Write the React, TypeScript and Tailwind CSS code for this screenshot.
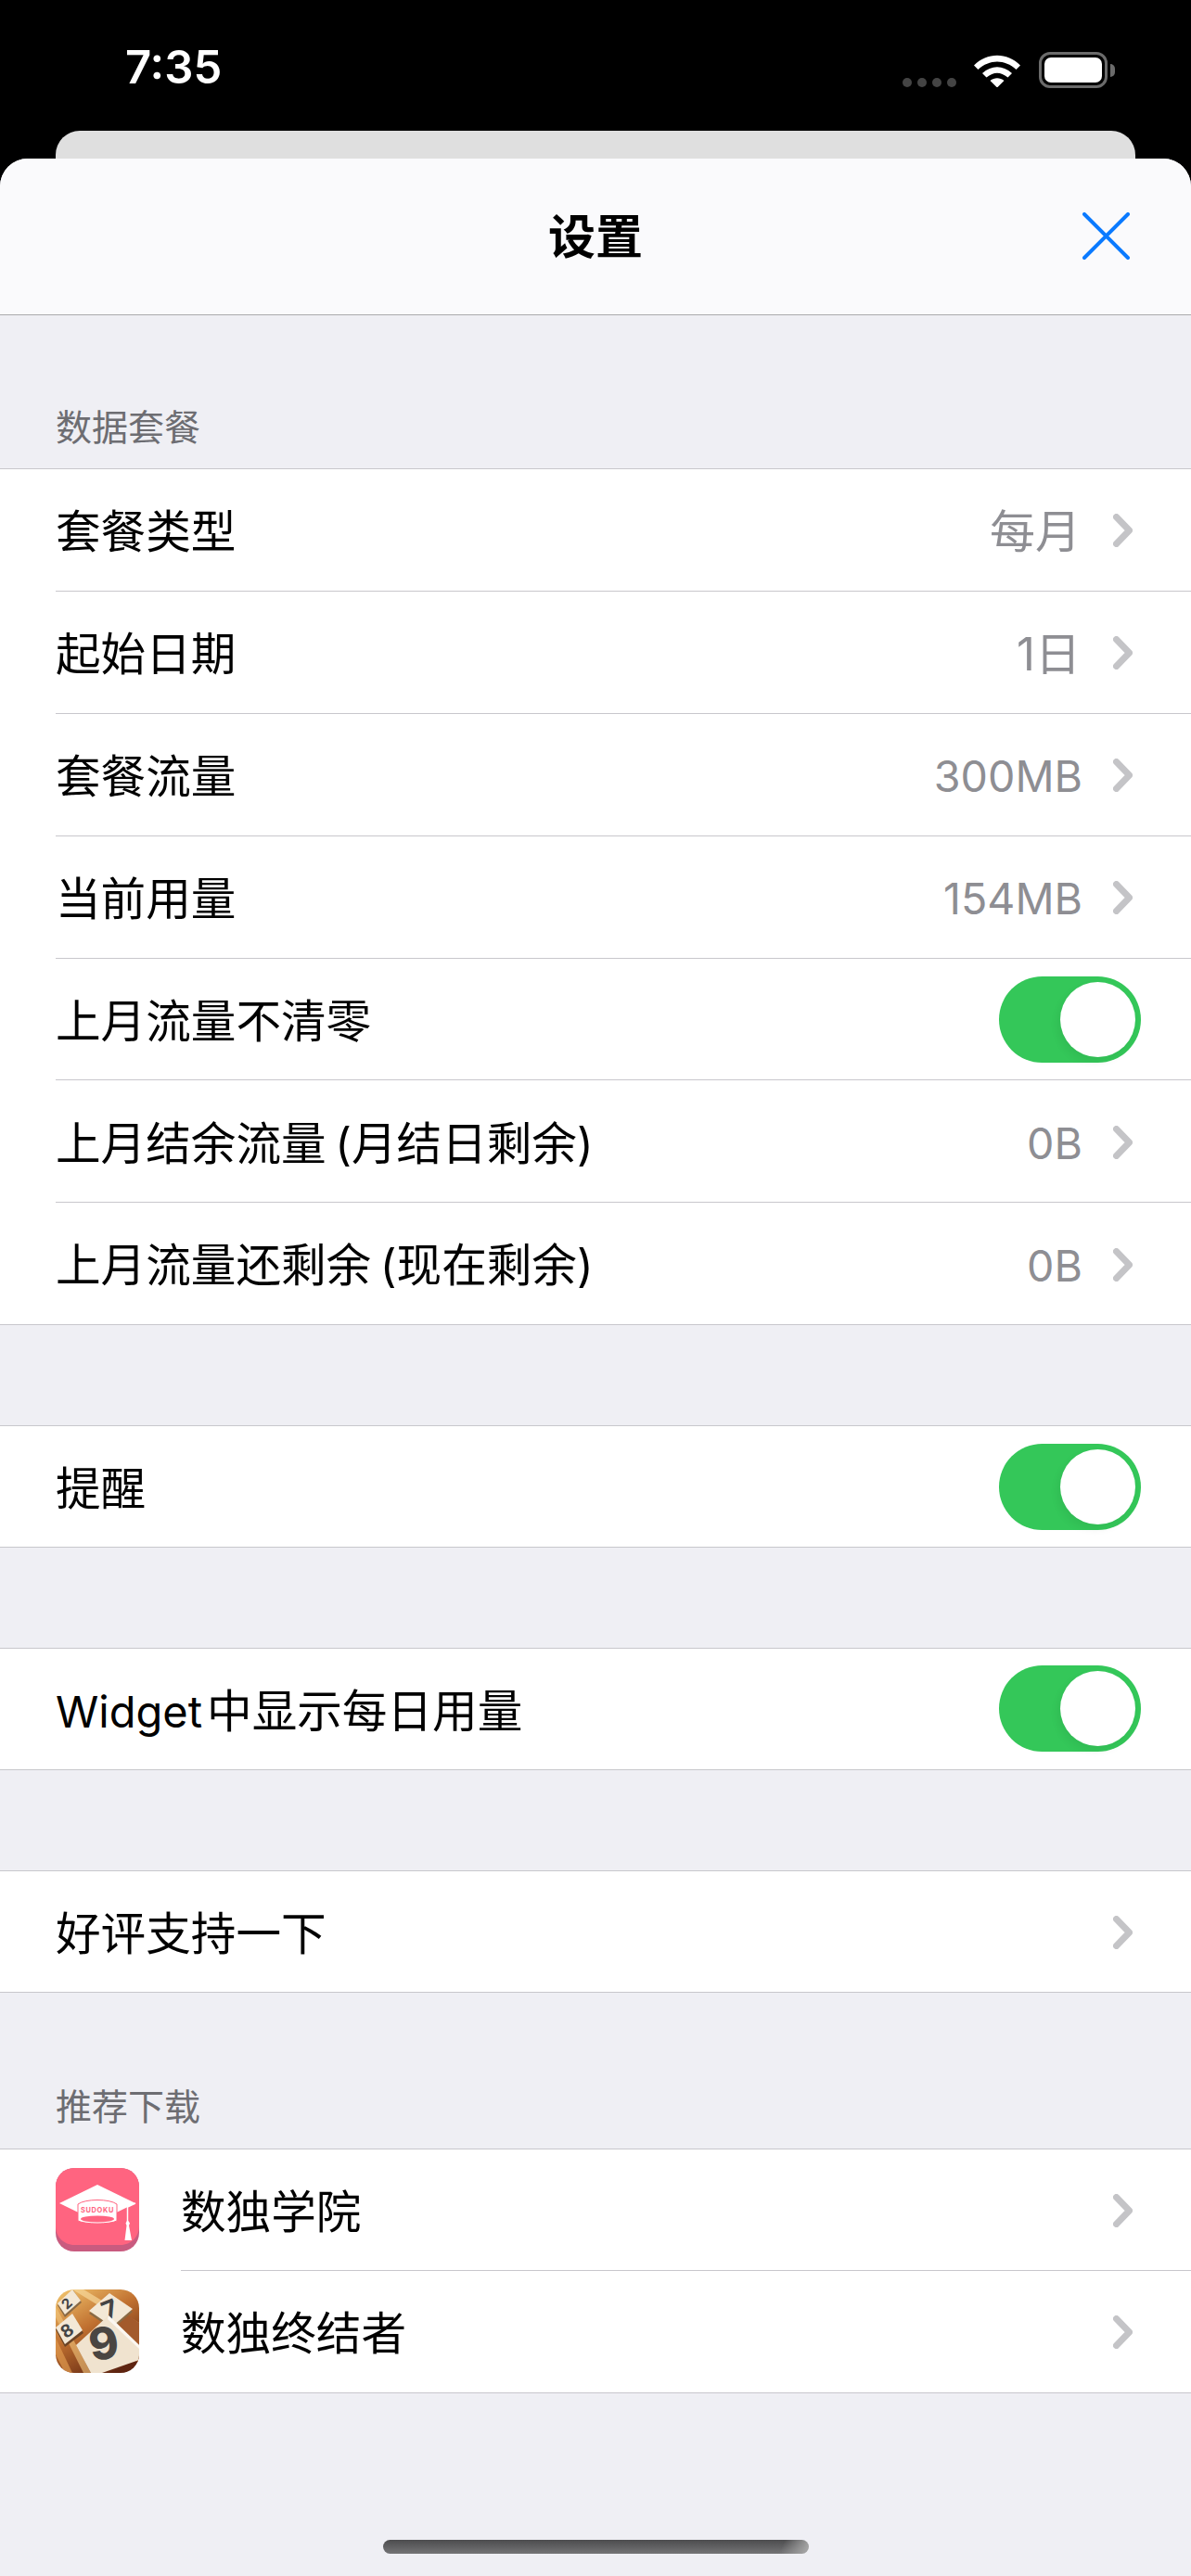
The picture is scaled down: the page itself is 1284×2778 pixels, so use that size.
import React from "react";

const FONT = "[font-family:Inter,'Noto_Sans_CJK_SC',sans-serif]";

function Chevron() {
  return (
    <svg width="21" height="36" viewBox="0 0 21 36" className="shrink-0 mr-[8px] mt-[2px]">
      <path d="M3.5 3.5 L17.5 18 L3.5 32.5" fill="none" stroke="#c4c4c7" strokeWidth="7" strokeLinecap="round" strokeLinejoin="round" />
    </svg>
  );
}

function Toggle() {
  return (
    <div className="w-[153px] h-[93px] rounded-full bg-[#34c759] flex items-center justify-end pr-[6px] mr-[-1px]">
      <div className="w-[81px] h-[81px] rounded-full bg-white shadow-[-3px_5px_10px_rgba(0,0,0,0.06)]" />
    </div>
  );
}

function Row({ label, value, cjkValue, chevron, toggle, last, single }: { label: React.ReactNode; value?: string; cjkValue?: boolean; chevron?: boolean; toggle?: boolean; last?: boolean; single?: boolean }) {
  const height = single ? "h-[130px]" : last ? "h-[130.9px]" : "h-[131.9px] border-b border-[#c8c7cc]";
  return (
    <div className={`ml-[60px] pr-[55px] flex items-center ${height}`}>
      <span className="flex-1 text-[48.6px] leading-none text-black whitespace-nowrap [word-spacing:-4px] pt-[6px]">{label}</span>
      {value && <span className={`text-[#8e8e93] leading-none pt-[5px] ${cjkValue ? "text-[49px] mr-[35px]" : "text-[46.6px] mr-[33px]"}`}>{value}</span>}
      {chevron && <Chevron />}
      {toggle && <Toggle />}
    </div>
  );
}

function Section({ children }: { children: React.ReactNode }) {
  return <div className="bg-white border-y border-[#c8c7cc]">{children}</div>;
}

function Header({ text, className = "" }: { text: string; className?: string }) {
  return (
    <div className={`pl-[60px] flex items-end text-[39px] leading-none text-[#6d6d72] ${className}`}>{text}</div>
  );
}

function HatIcon() {
  return (
    <svg width="90" height="90" viewBox="0 0 90 90" className="shrink-0">
      <defs>
        <clipPath id="c1"><rect width="90" height="90" rx="20" /></clipPath>
      </defs>
      <g clipPath="url(#c1)">
        <rect width="90" height="90" fill="#c95b7f" />
        <path d="M0 0H90V63C90 74 81 83 70 83H20C9 83 0 74 0 63Z" fill="#ff6480" />
        <path d="M4 38L45 18L86 38L45 58Z" fill="#fff" />
        <path d="M24 39C32 33 58 33 66 39V57C58 61 32 61 24 57Z" fill="#fff" stroke="#ff6480" strokeWidth="1" />
        <ellipse cx="45" cy="55" rx="18" ry="3.4" fill="#ff6480" />
        <text x="45" y="48" textAnchor="middle" fontSize="7.4" fontWeight="700" fill="#ff6480" fontFamily="Inter,sans-serif" letterSpacing=".7">SUDOKU</text>
        <path d="M86 38L77.5 42V58" fill="none" stroke="#fff" strokeWidth="1.5" />
        <path d="M77.5 56L80 59.5L79 62L82 78H74.5L76.5 62L75.5 59.5Z" fill="#fff" />
      </g>
    </svg>
  );
}

function WoodIcon() {
  return (
    <svg width="90" height="90" viewBox="0 0 90 90" className="shrink-0">
      <defs>
        <clipPath id="c2"><rect width="90" height="90" rx="20" /></clipPath>
        <linearGradient id="w" x1="0.1" y1="0" x2="0.7" y2="1">
          <stop offset="0" stopColor="#efc06a" />
          <stop offset="0.45" stopColor="#c07030" />
          <stop offset="1" stopColor="#5e2410" />
        </linearGradient>
      </defs>
      <g clipPath="url(#c2)">
        <rect width="90" height="90" fill="url(#w)" />
        <path d="M0 30L30 90H38L0 18Z" fill="#f3c67d" opacity=".6" />
        <path d="M30 0L90 36V44L18 0Z" fill="#f6d79a" opacity=".7" />
        <path d="M0 52L18 90H10L0 70Z" fill="#e09a4f" opacity=".7" />
        <path d="M66 20L90 36V80L70 60Z" fill="#a35a2c" />
        <polygon points="2,17 19,1 28,14 10,30" fill="#8a6a45" />
        <polygon points="2,15 18,0 27,12 10,27" fill="#f3e8d6" />
        <text transform="translate(15.5,19) rotate(-42)" textAnchor="middle" fontSize="15" fontWeight="700" fill="#444" fontFamily="Inter,sans-serif">2</text>
        <polygon points="36,26 58,6 83,24 61,43" fill="#8a6a45" />
        <polygon points="36,23 58,4 83,21 61,40" fill="#f3e8d6" />
        <text transform="translate(62,31) rotate(-22)" textAnchor="middle" fontSize="28" fontWeight="700" fill="#444" fontFamily="Inter,sans-serif">7</text>
        <polygon points="0,43 18,28 30,47 10,62" fill="#6b4426" />
        <polygon points="0,41 18,26 29,44 10,59" fill="#f3e8d6" />
        <text transform="translate(16,50) rotate(-35)" textAnchor="middle" fontSize="19" fontWeight="700" fill="#444" fontFamily="Inter,sans-serif">8</text>
        <polygon points="22,60 57,28 90,60 90,76 50,90 38,90" fill="#f0e3cf" />
        <polygon points="57,28 90,60 90,64 56,32" fill="#fff" opacity=".7" />
        <text transform="translate(55,75) rotate(-10)" textAnchor="middle" fontSize="48" fontWeight="800" fill="#4a4642" fontFamily="Inter,sans-serif">9</text>
      </g>
    </svg>
  );
}

function AppRow({ icon, label, last }: { icon: React.ReactNode; label: string; last?: boolean }) {
  return (
    <div className="flex items-center h-[131px]">
      <div className="w-[195px] pl-[60px] shrink-0">{icon}</div>
      <div className={`flex-1 h-full pr-[55px] flex items-center ${last ? "" : "border-b border-[#c8c7cc]"}`}>
        <span className="flex-1 text-[48.6px] leading-none text-black pt-[6px]">{label}</span>
        <Chevron />
      </div>
    </div>
  );
}

export default function App() {
  return (
    <div className={`w-[1284px] h-[2778px] bg-black overflow-hidden flex flex-col ${FONT}`}>
      <div className="h-[141px] shrink-0 flex items-start pl-[135px] pr-[82px] pt-[44px]">
        <span className="text-white text-[49px] leading-[58px] font-semibold flex-1">7:35</span>
        <div className="flex items-end h-[48px] pt-[9px]">
          <div className="flex gap-[6px] mb-[-2px] mr-[19px]">
            {[0, 1, 2, 3].map((i) => (
              <span key={i} className="w-[10px] h-[10px] rounded-full bg-[#444444]" />
            ))}
          </div>
          <svg width="50" height="38" viewBox="0 0 50 38" className="mr-[20px] mb-[-2px]">
            <path d="M0 14.5C14 0 36 0 50 14.5L45.5 19C33.5 7.5 16.5 7.5 4.5 19Z" fill="#fff" />
            <path d="M9 23C19 14 31 14 41 23L36.5 27.5C28.5 21 21.5 21 13.5 27.5Z" fill="#fff" />
            <path d="M17.5 31C22 27.2 28 27.2 32.5 31L25 38.5Z" fill="#fff" />
          </svg>
          <div className="flex items-center mb-[-3px]">
            <div className="w-[74px] h-[39px] rounded-[12px] border-[3px] border-[#6b6b6b] p-[3px]">
              <div className="w-full h-full rounded-[7px] bg-white" />
            </div>
            <div className="w-[5px] h-[14px] ml-[3px] bg-[#6b6b6b] rounded-r-full" />
          </div>
        </div>
      </div>

      <div className="h-[30px] shrink-0 mx-[60px] bg-[#dfdfdf] rounded-t-[26px]" />

      <div className="flex-1 bg-[#efeff4] rounded-t-[30px] overflow-hidden flex flex-col">
        <div className="h-[169px] shrink-0 bg-[#fafafc] border-b border-[#a9a9ac] flex items-center pl-[591px] pr-[66px]">
          <span className="flex-1 text-[51px] leading-none font-semibold text-black">设置</span>
          <svg width="51" height="51" viewBox="0 0 51 51" className="mt-[-2px]">
            <path d="M2 2L49 49M49 2L2 49" stroke="#0a7aff" strokeWidth="4" strokeLinecap="round" />
          </svg>
        </div>

        <Header text="数据套餐" className="h-[165px] pb-[25px]" />
        <Section>
          <Row label="套餐类型" value="每月" cjkValue chevron />
          <Row label="起始日期" value="1日" cjkValue chevron />
          <Row label="套餐流量" value="300MB" chevron />
          <Row label="当前用量" value="154MB" chevron />
          <Row label="上月流量不清零" toggle />
          <Row label="上月结余流量 (月结日剩余)" value="0B" chevron />
          <Row label="上月流量还剩余 (现在剩余)" value="0B" chevron last />
        </Section>

        <div className="h-[108px] shrink-0" />
        <Section>
          <Row label="提醒" toggle single />
        </Section>

        <div className="h-[107.7px] shrink-0" />
        <Section>
          <Row label={<><span className="text-[47px] mr-[5px]">Widget</span>中显示每日用量</>} toggle single />
        </Section>

        <div className="h-[108px] shrink-0" />
        <Section>
          <Row label="好评支持一下" chevron single />
        </Section>

        <Header text="推荐下载" className="h-[168px] pb-[26px]" />
        <Section>
          <AppRow icon={<HatIcon />} label="数独学院" />
          <AppRow icon={<WoodIcon />} label="数独终结者" last />
        </Section>

        <div className="flex-1 flex items-end justify-center pb-[24px]">
          <div className="w-[459px] h-[15px] rounded-full bg-[linear-gradient(115deg,transparent_93%,#a3a3a3_99%),linear-gradient(to_bottom,#4c4c4e,#747476)]" />
        </div>
      </div>
    </div>
  );
}
